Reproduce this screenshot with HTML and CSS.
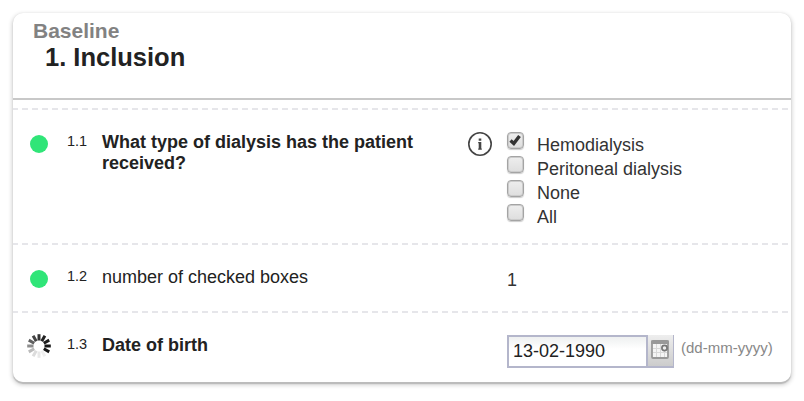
FILE: index.html
```
<!DOCTYPE html>
<html lang="en">
<head>
<meta charset="UTF-8">
<meta name="viewport" content="width=device-width, initial-scale=1.0">
<title>Baseline - Inclusion</title>
<link rel="stylesheet" href="styles.css">
</head>
<body>
<div class="card">
    <div class="header">
        <div class="phase">Baseline</div>
        <h1 class="step">1. Inclusion</h1>
    </div>
    <div class="row row-options">
        <div class="status"><span class="dot"></span></div>
        <div class="number">1.1</div>
        <div class="question required">What type of dialysis has the patient received?</div>
        <div class="info">
            <svg width="26" height="26" viewBox="0 0 26 26">
                <circle cx="13" cy="13" r="11.2" fill="none" stroke="#444" stroke-width="1.6"/>
                <path d="M11.700 7.500h2.600v2.200h-2.600zM11.200 11h3.100v6.500h.5v1.300h-3.600v-1.300h.5v-5.200h-.5z" fill="#444"/>
            </svg>
        </div>
        <div class="answer">
            <label class="option"><span class="box"><svg width="15" height="15" viewBox="0 0 15 15"><path d="M2.500 7.500l3.300 3 5.700-7.500" fill="none" stroke="#333" stroke-width="3.400"/></svg></span>Hemodialysis</label>
            <label class="option"><span class="box"></span>Peritoneal dialysis</label>
            <label class="option"><span class="box"></span>None</label>
            <label class="option"><span class="box"></span>All</label>
        </div>
    </div>
    <div class="row row-count">
        <div class="status"><span class="dot"></span></div>
        <div class="number">1.2</div>
        <div class="question">number of checked boxes</div>
        <div class="info"></div>
        <div class="answer count">1</div>
    </div>
    <div class="row row-date">
        <div class="status status-busy">
            <svg class="spinner" width="24" height="24" viewBox="-12 -12 24 24" stroke-width="3">
                <path d="M0-5.500V-11.800" stroke="#333"/>
                <path d="M0-5.500V-11.800" stroke="#222" transform="rotate(30)"/>
                <path d="M0-5.500V-11.800" stroke="#1c1c1c" transform="rotate(60)"/>
                <path d="M0-5.500V-11.800" stroke="#161616" transform="rotate(90)"/>
                <path d="M0-5.500V-11.800" stroke="#161616" transform="rotate(120)"/>
                <path d="M0-5.500V-11.800" stroke="#f0f0f0" transform="rotate(150)"/>
                <path d="M0-5.500V-11.800" stroke="#e8e8e8" transform="rotate(180)"/>
                <path d="M0-5.500V-11.800" stroke="#dcdcdc" transform="rotate(210)"/>
                <path d="M0-5.500V-11.800" stroke="#bbb" transform="rotate(240)"/>
                <path d="M0-5.500V-11.800" stroke="#8c8c8c" transform="rotate(270)"/>
                <path d="M0-5.500V-11.800" stroke="#606060" transform="rotate(300)"/>
                <path d="M0-5.500V-11.800" stroke="#444" transform="rotate(330)"/>
            </svg>
        </div>
        <div class="number">1.3</div>
        <div class="question required">Date of birth</div>
        <div class="info"></div>
        <div class="answer date">
            <div class="date-value">13-02-1990</div>
            <div class="date-button">
                <svg width="20" height="20" viewBox="0 0 20 20">
                    <rect x="2" y="2" width="16" height="17" rx="1" fill="#f5f5f5" stroke="#999" stroke-width="1.8"/>
                    <path d="M1.200 1.500h17.600v3.500H1.200z" fill="#999"/>
                    <path d="M6.500 5v13M10.500 5v13M14.500 12v6M3 9.500h8M3 13.500h14" stroke="#d8d8d8" fill="none"/>
                    <circle cx="14.500" cy="9" r="2.600" fill="#eee" stroke="#777" stroke-width="1.700"/>
                </svg>
            </div>
            <div class="date-format">(dd-mm-yyyy)</div>
        </div>
    </div>
</div>
</body>
</html>
```
FILE: styles.css
```
* { box-sizing: border-box; }
body { margin: 0; padding: 13px; background: #fff; color: #222; font-family: Arial, "Liberation Sans", sans-serif; font-size: 18px; }
.card { width: 778px; height: 369px; background: #fff; border-radius: 10px; box-shadow: 0 0 1px #ddd, 0 2px 1px #b8b8b8, 0 2px 4px 1px #d0d0d0; }
.header { height: 87px; padding: 6px 0 0 20px; border-bottom: 2px solid #c8c8c8; margin-bottom: 8px; }
.phase { color: #828282; font-size: 21px; font-weight: bold; line-height: 24px; }
.step { margin: 0 0 0 12px; font-size: 25.5px; line-height: 28px; }
.row { display: grid; grid-template-columns: 54px 35px 365px 40px 1fr; align-items: start; background: repeating-linear-gradient(90deg, #e6e6ea 0 5px, transparent 5px 9px, #e6e6ea 9px 10px) 0 0 / 100% 2px no-repeat; }
.row-options { height: 135px; }
.row-count, .row-date { height: 68px; }
.status { padding: 27px 0 0 17px; }
.status-busy { padding: 23px 0 0 14px; }
.dot { display: block; width: 18px; height: 18px; border-radius: 50%; background: #30e578; }
.spinner { display: block; }
.number { padding-top: 24px; font-size: 14.5px; line-height: 18px; }
.question { width: 330px; padding-top: 24px; line-height: 21px; }
.required { font-weight: bold; }
.info { padding-top: 23px; }
.info svg { display: block; }
.answer { padding-top: 24px; color: #333; }
.option { display: flex; height: 24px; line-height: 27px; }
.box { width: 17px; height: 17px; margin-right: 13px; border: 1px solid #a4a4a4; border-radius: 4px; background: linear-gradient(#eee, #dedede); box-shadow: inset 0 0 0 1px #ccc, 0 1px 1px #ccc; }
.box svg { display: block; }
.count { padding-top: 27px; line-height: 21px; }
.date { display: flex; }
.date-value { width: 141px; height: 33px; padding-left: 4px; border: 2px solid #b4b6cb; background: linear-gradient(#eef0f0, #fff 12px); color: #222; line-height: 29px; }
.date-button { width: 26px; height: 33px; padding: 4px 0 0 2px; border: solid #b4b6cb; border-width: 0 1px 2px 0; background: linear-gradient(#eee, #ccc); }
.date-format { padding-left: 7px; color: #888; font-size: 15px; line-height: 26px; }
```
